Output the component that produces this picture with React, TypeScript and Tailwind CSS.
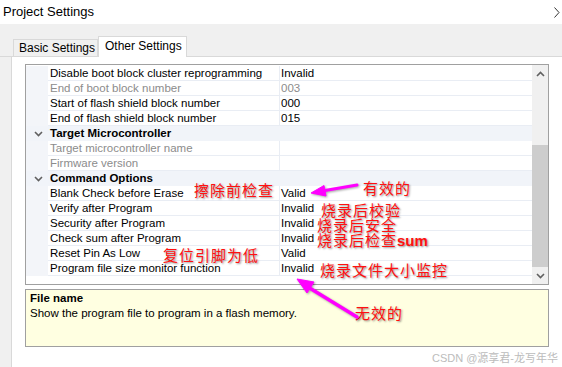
import React from "react";

type Row =
  | { cat: string }
  | { name: string; value: string; disabled?: boolean };

const rows: Row[] = [
  { name: "Disable boot block cluster reprogramming", value: "Invalid" },
  { name: "End of boot block number", value: "003", disabled: true },
  { name: "Start of flash shield block number", value: "000" },
  { name: "End of flash shield block number", value: "015" },
  { cat: "Target Microcontroller" },
  { name: "Target microcontroller name", value: "", disabled: true },
  { name: "Firmware version", value: "", disabled: true },
  { cat: "Command Options" },
  { name: "Blank Check before Erase", value: "Valid" },
  { name: "Verify after Program", value: "Invalid" },
  { name: "Security after Program", value: "Invalid" },
  { name: "Check sum after Program", value: "Invalid" },
  { name: "Reset Pin As Low", value: "Valid" },
  { name: "Program file size monitor function", value: "Invalid" },
];

const Chevron = ({ up }: { up?: boolean }) => (
  <svg width="9" height="6" viewBox="0 0 9 6">
    <polyline
      points={up ? "1,5 4.5,1.5 8,5" : "1,1 4.5,4.5 8,1"}
      fill="none"
      stroke="#606060"
      strokeWidth="1.6"
    />
  </svg>
);

const PropertyRow = ({ row }: { row: Row }) => {
  if ("cat" in row) {
    return (
      <div className="flex h-[15px] bg-[#f1f4f9]">
        <div className="w-[22px] flex items-center justify-center pl-[2px]">
          <Chevron />
        </div>
        <div className="flex-1 pl-[2px] font-bold leading-[15px] text-black">{row.cat}</div>
      </div>
    );
  }
  const color = row.disabled ? "text-[#8c8c8c]" : "text-black";
  return (
    <div className="flex h-[15px]">
      <div className="w-[22px] bg-[#f3f5f9]" />
      <div className={`w-[231px] pl-[2px] leading-[14px] border-b border-[#e9edf4] ${color}`}>{row.name}</div>
      <div className={`flex-1 pl-px leading-[14px] border-b border-l border-[#e9edf4] ${color}`}>{row.value}</div>
    </div>
  );
};

const Note = ({ children, className }: { children: React.ReactNode; className: string }) => (
  <div
    className={`absolute text-[15px] tracking-[1px] leading-[15px] h-[15px] text-[#ff1010] whitespace-nowrap [text-shadow:1px_1px_2px_rgba(0,0,0,0.45)] ${className}`}
    style={{ fontFamily: '"Noto Sans CJK SC", sans-serif' }}
  >
    {children}
  </div>
);

export default function App() {
  return (
    <div
      className="relative w-[562px] h-[367px] bg-white overflow-hidden text-[11.5px] text-black"
      style={{ fontFamily: '"Liberation Sans", "Noto Sans CJK JP", sans-serif' }}
    >
      {/* title */}
      <div className="h-[24px] flex items-center justify-between pl-[3px] pr-[2px]">
        <span className="text-[13px]">Project Settings</span>
        <svg width="6" height="11" viewBox="0 0 6 11">
          <polyline points="0.5,0.5 5,5.5 0.5,10.5" fill="none" stroke="#333" strokeWidth="1" />
        </svg>
      </div>

      {/* tabs */}
      <div className="h-[33px] bg-[#f0f0f0] flex items-end pl-[13px] border-b border-[#d9d9d9]">
        <div className="h-[17px] w-[85px] border border-b-0 border-[#d9d9d9] bg-[#f0f0f0] text-[12px] leading-[16px] pl-[5px]">
          Basic Settings
        </div>
        <div className="h-[21px] w-[89px] border border-b-0 border-[#d9d9d9] bg-white text-[12px] leading-[18px] pl-[6px] -mb-px relative">
          Other Settings
        </div>
      </div>

      {/* body */}
      <div className="flex h-[310px]">
        <div className="w-[12px] bg-[#f0f0f0] border-r border-[#d9d9d9]" />
        <div className="flex-1 pl-[13px] pt-[7px]">
          {/* property grid */}
          <div className="w-[524px] h-[221px] border border-[#a0a0a0] flex">
            <div className="flex-1 pt-px">
              {rows.map((r, i) => (
                <PropertyRow key={i} row={r} />
              ))}
            </div>
            <div className="w-[16px] bg-[#f0f0f0] flex flex-col">
              <div className="h-[17px] flex items-center justify-center">
                <Chevron up />
              </div>
              <div className="h-[63px]" />
              <div className="h-[122px] bg-[#cdcdcd]" />
              <div className="flex-1 flex items-center justify-center">
                <Chevron />
              </div>
            </div>
          </div>

          {/* description */}
          <div className="w-[524px] h-[58px] mt-[4px] border border-[#a0a0a0] bg-[#ffffe1] pl-[4px] pt-[2px]">
            <div className="font-bold leading-[13px]">File name</div>
            <div className="leading-[15px] mt-px">Show the program file to program in a flash memory.</div>
          </div>
        </div>
      </div>

      {/* watermark */}
      <div
        className="absolute right-[4px] top-[350px] text-[11px] text-[#bcbcbc]"
        style={{ fontFamily: '"Liberation Sans", "Noto Sans CJK SC", sans-serif' }}
      >
        CSDN @源享君-龙写年华
      </div>

      {/* annotations */}
      <Note className="left-[194px] top-[182px]">擦除前检查</Note>
      <Note className="left-[363px] top-[180px]">有效的</Note>
      <Note className="left-[321px] top-[202px]">烧录后校验</Note>
      <Note className="left-[317px] top-[217px]">烧录后安全</Note>
      <Note className="left-[317px] top-[232px]">
        烧录后检查<span className="font-bold tracking-normal" style={{ fontFamily: '"Liberation Sans", sans-serif' }}>sum</span>
      </Note>
      <Note className="left-[163px] top-[247px]">复位引脚为低</Note>
      <Note className="left-[320px] top-[262px]">烧录文件大小监控</Note>
      <Note className="left-[355px] top-[305px]">无效的</Note>

      <svg className="absolute inset-0 pointer-events-none" width="562" height="367">
        <g fill="#ff00ff" stroke="#ff00ff" style={{ filter: "drop-shadow(1px 1px 1px rgba(0,0,0,0.35))" }}>
          <line x1="357" y1="185" x2="322" y2="191" strokeWidth="3" strokeLinecap="round" />
          <polygon points="311,193 326,196 324,185.5" strokeWidth="1" />
          <line x1="357" y1="317" x2="308" y2="287" strokeWidth="3.5" strokeLinecap="round" />
          <polygon points="297,279 314,282 307,293" strokeWidth="1" />
        </g>
      </svg>
    </div>
  );
}
